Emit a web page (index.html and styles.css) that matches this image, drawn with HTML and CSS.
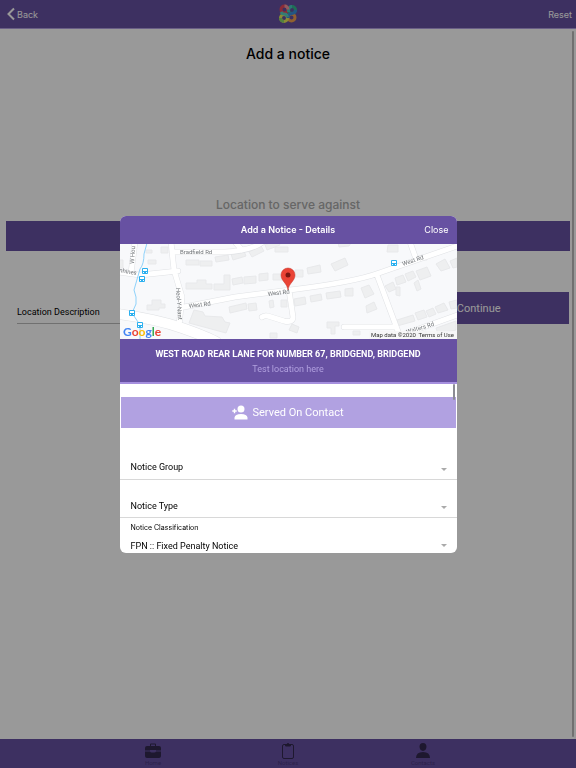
FILE: index.html
```html
<!DOCTYPE html>
<html lang="en">
<head>
<meta charset="utf-8">
<meta name="viewport" content="width=device-width, initial-scale=1">
<title>Add a notice</title>
<link rel="stylesheet" href="styles.css">
</head>
<body>
<div class="app">
  <header class="topbar">
    <a class="topbar-link" href="#back">
      <svg class="chevron" viewBox="0 0 8 14" aria-hidden="true"><path d="M7 1.500L1.500 7L7 12.500"/></svg>Back
    </a>
    <svg class="logo" viewBox="0 0 20 20" role="img" aria-label="Logo">
      <g fill="none" stroke-width="3">
        <circle cx="6.500" cy="5.500" r="3.500" stroke="#e8485c"/>
        <circle cx="14" cy="6" r="3.500" stroke="#35b890"/>
        <circle cx="13.500" cy="13.500" r="3.500" stroke="#f0a050"/>
        <circle cx="6" cy="14" r="3.500" stroke="#e6e65a"/>
        <path d="M2.500 14A3.500 3.500 0 0 0 6 17.500" stroke="#8ad86a"/>
        <path d="M10.500 8V6A3.500 3.500 0 0 1 14 2.500" stroke="#48c8c0"/>
        <path d="M17.500 6A3.500 3.500 0 0 1 14 9.500Q10 9.500 10 14" stroke="#3a90e0"/>
        <path d="M6.500 2A3.500 3.500 0 0 1 10 5.500" stroke="#f59aa0"/>
        <path d="M3 8Q4 10 6 10Q9 10 9.500 13" stroke="#58cfc0"/>
      </g>
    </svg>
    <a class="topbar-link end" href="#reset">Reset</a>
  </header>

  <main class="page">
    <h1>Add a notice</h1>
    <h2>Location to serve against</h2>
    <button class="bar" type="button" aria-label="Choose location"></button>
    <form class="location-row">
      <input class="location-input" type="text" placeholder="Location Description" aria-label="Location Description">
      <button class="continue" type="button">Continue</button>
    </form>
    <span class="page-scroll"></span>
  </main>

  <nav class="tabs">
    <a href="#home">
      <svg viewBox="0 0 16 16" aria-hidden="true"><path fill="currentColor" d="M5 3V1.500Q5 .5 6 .5h4q1 0 1 1V3h3q2 0 2 2v2.500h-5V7H5v.5H0V5q0-2 2-2zM6 3h4V1.500H6zM0 8.500h5q.5 1 1.500 1h3q1 0 1.500-1h5V13q0 2-2 2H2q-2 0-2-2z"/></svg>
      <span>Home</span>
    </a>
    <a href="#notices">
      <svg viewBox="0 0 16 16" aria-hidden="true"><g fill="none" stroke="currentColor"><rect x="2.500" y="1.500" width="11" height="14" rx="1.500"/><path fill="currentColor" d="M5.500 1.500h1.500q0-1 1-1t1 1h1.500v1.500h-5z"/></g></svg>
      <span>Notices</span>
    </a>
    <a href="#contacts">
      <svg viewBox="0 0 16 16" aria-hidden="true"><path fill="currentColor" d="M8 0C10.300 0 11.500 1.600 11.500 3.800S10 8 8 8S4.500 6 4.500 3.800S5.700 0 8 0zM1 15Q1 9 8 9T15 15z"/></svg>
      <span>Contacts</span>
    </a>
  </nav>
</div>

<div class="overlay">
  <section class="modal" role="dialog" aria-labelledby="dialog-title">
    <header class="modal-head">
      <h2 id="dialog-title">Add a Notice - Details</h2>
      <button type="button">Close</button>
    </header>

    <svg class="map" viewBox="0 0 337 95" preserveAspectRatio="xMidYMid slice" role="img" aria-label="Map of West Rd">
      <defs>
        <g id="stop"><rect x="-3" y="-3" width="6" height="6" rx="1" fill="#2bb0ef"/><path d="M-2 -2h4v2h-4zM-2 1h1v1h-1zM1 1h1v1h-1z" fill="#fff"/></g>
        <g id="roads" fill="none" stroke-linecap="round" stroke-linejoin="round">
          <path d="M15 -2L11 29M-2 28L20 31L58 27M51 -2L54 26L62 53L59 82M54 8L105 8Q130 7 143 -2M115 -2L122 6M64 63L115 53L170 46Q235 38 259 29L340 1M290 -2L296 15M257 31L279 90M224 83H276M276 93L340 70M169 46L173 73Q173 79 164 77L148 72Q145 71 142 73"/>
        </g>
      </defs>
      <rect width="337" height="95" fill="#f8f9fb"/>
      <g class="houses">
        <path d="M66 16h13v5H66zM80 17h12v5H80zM95 13l13-2 1 5-13 2zM111 10l13-3 2 5-13 4zM129 8l12-6 3 5-12 6zM145 1l12-5 3 5-13 5zM155 3h13v5h-13z"/>
        <path d="M66 39h11v-3h9v4h6v5H66zM94 40h10V31h6v15H94zM112 35l10-2 1 6-10 2zM124 33l12-1v7l-12 1zM139 30l9-1v7l-9 1zM153 30h10v6h-10zM175 26h8v7h-8zM187 24l13-3 1 7-13 2zM211 20l14-6 3 7-13 6z"/>
        <path d="M27 61h5v-5h9v4h4v4h-6v2H27zM109 63l17-4 1 6-17 4zM128 60l8-1 1 7-8 1zM149 57l4-1 1 7-4 1zM161 56h6v7h-6zM174 55l11-2 1 7-11 2zM190 52l11-2 1 6-11 2zM206 49l14-2 1 6-14 2zM225 45l8-1v8h-8zM241 44l8-3 5 9-9 4zM246 62l8-4 3 7-10 4z"/>
        <path d="M74 66l9 2 2 4 17 1 3 5 5 1-4 10-37-10zM207 78h12v4h-4v8h-4v-6h-4zM172 80l7 3-2 6-8-3zM150 89h7v5h-7zM233 87h7v4h-7z"/>
        <path d="M268 1h10v7h-11zM218 -2l13 1-2 3-10 1zM299 16h8v-5l-9 1zM265 42l8-4 3 7-7 3zM275 34l8-3 3 7-9 3zM285 30l8-3 3 6-8 4zM296 27l11-4 4 9-11 4zM316 20l9-5 5 9-9 3zM330 17l7-3v9l-4 1zM276 43h4v9l-4-1zM294 39l4-3 3 9-4 2z"/>
        <path d="M277 76l16-5 2 6-18 5zM295 69l9-3 3 7-9 3zM306 67l7-3 3 6-7 3zM315 63l9-4 4 7-10 3zM329 58l8-2v8l-6 1zM286 95l20-8 3 8zM316 84l20-7v9l-18 4zM-1 16h4v8H-1zM26 6h6v3h-6zM41 3h7v6h-7zM28 16h8v4h-8z"/>
      </g>
      <use href="#roads" stroke="#e0e2e5" stroke-width="6"/>
      <path d="M-2 70Q36 75 62 84T98 99" fill="none" stroke="#e0e2e5" stroke-width="11"/>
      <use href="#roads" stroke="#fff" stroke-width="5"/>
      <path d="M-2 70Q36 75 62 84T98 99" fill="none" stroke="#fff" stroke-width="10"/>
      <path d="M27 -1L24 10Q24 20 20 25L14 46Q17 53 16 60L12 69L20 81V96" fill="none" stroke="#8fd2fa"/>
      <use href="#stop" x="25" y="27"/><use href="#stop" x="22" y="35"/><use href="#stop" x="12" y="69"/><use href="#stop" x="20" y="81"/><use href="#stop" x="274" y="19"/>
      <g class="road-names">
        <text x="60" y="10">Bradfield Rd</text>
        <text transform="translate(69 64) rotate(-7)">West Rd</text>
        <text transform="translate(148 52) rotate(-7)">West Rd</text>
        <text transform="translate(283 22) rotate(-19)">West Rd</text>
        <text transform="translate(56 44) rotate(86)">Heol-Y-Nant</text>
        <text transform="translate(14 20) rotate(-86)">W Hou</text>
        <text transform="translate(-1 28) rotate(10)">nhines</text>
        <text transform="translate(287 90) rotate(-17)">Walters Rd</text>
      </g>
      <rect x="249" y="87" width="88" height="8" fill="#f6f6f7" fill-opacity=".8"/>
      <g class="credits"><text x="251" y="93">Map data ©2020</text><text x="334" y="93" text-anchor="end">Terms of Use</text></g>
      <text class="google" x="3" y="92"><tspan fill="#4285f4">G</tspan><tspan fill="#ea4335">o</tspan><tspan fill="#fbbc05">o</tspan><tspan fill="#4285f4">g</tspan><tspan fill="#34a853">l</tspan><tspan fill="#ea4335">e</tspan></text>
      <path d="M168 46C167 39 161 37 161 31A7 7 0 0 1 175 31C175 37 169 39 168 46z" fill="#ea4335" stroke="#c5352b" stroke-width=".5"/>
      <circle cx="168" cy="31" r="2.500" fill="#7a1712"/>
    </svg>

    <div class="place">
      <strong>WEST ROAD REAR LANE FOR NUMBER 67, BRIDGEND, BRIDGEND</strong>
      <span>Test location here</span>
    </div>

    <form class="details">
      <button class="served" type="button">
        <svg viewBox="0 0 16 15" aria-hidden="true"><path fill="currentColor" d="M9 .5a3.500 3.500 0 0 1 0 7a3.500 3.500 0 0 1 0-7zM2.500 14.500v-2Q3 9 9 9t6.500 3.500v2zM1.800 3.800h1.400v1.500h1.500v1.400H3.200v1.500H1.800V6.700H.3V5.300h1.500z"/></svg>
        Served On Contact
      </button>
      <div class="field group"><select aria-label="Notice Group"><option>Notice Group</option></select></div>
      <div class="field"><select aria-label="Notice Type"><option>Notice Type</option></select></div>
      <div class="field labelled">
        <label for="classification">Notice Classification</label>
        <select id="classification"><option>FPN :: Fixed Penalty Notice</option></select>
      </div>
      <span class="details-scroll"></span>
    </form>
  </section>
</div>
</body>
</html>
```
FILE: styles.css
```css
* { box-sizing: border-box; }

body {
  margin: 0;
  background: #fff;
  color: #000;
  font-family: Roboto, "Liberation Sans", sans-serif;
  font-size: 9px;
}

h1, h2 { margin: 0; font-family: Inter, "Liberation Sans", sans-serif; font-weight: 500; }
a { color: inherit; text-decoration: none; }
button, input, select { font: inherit; color: inherit; border: 0; border-radius: 0; padding: 0; margin: 0; background: none; }

.app { display: flex; flex-direction: column; min-height: 100vh; }

.topbar {
  display: grid;
  grid-template-columns: 1fr auto 1fr;
  align-items: center;
  height: 29px;
  padding: 0 4px 0 7px;
  background: #6751a2;
  border-bottom: 1px solid #b19fe0;
  color: #fff;
}
.topbar-link { display: flex; align-items: center; gap: 2px; font-family: Inter, sans-serif; }
.topbar-link.end { justify-content: flex-end; }
.chevron { width: 8px; height: 14px; fill: none; stroke: currentColor; stroke-width: 2; }
.logo { width: 20px; height: 20px; margin-right: 4px; }

.page { position: relative; flex: 1; padding: 16px 6px 0; }
.page h1 { font-size: 14px; line-height: 18px; text-align: center; }
.page h2 { margin-top: 134px; font-size: 12px; line-height: 16px; text-align: center; color: #aaa; }
.bar { display: block; width: 100%; height: 30px; margin-top: 8px; background: #6751a2; }
.location-row { display: grid; grid-template-columns: 2fr 1fr; gap: 10px; margin: 41px 1px 0 11px; }
.location-input { width: 100%; height: 32px; padding-top: 9px; border-bottom: 1px solid #bbb; }
.location-input::placeholder { color: #000; opacity: 1; }
.continue { height: 32px; background: #6751a2; color: #fff; font-size: 11px; }
.page-scroll { position: absolute; top: 2px; right: 2px; bottom: 2px; width: 2px; border-radius: 1px; background: #bbb; }

.tabs { display: flex; justify-content: center; height: 29px; background: #6751a2; color: #32284f; }
.tabs a { display: flex; flex-direction: column; align-items: center; width: 135px; padding-top: 4px; font-size: 6px; line-height: 8px; }
.tabs svg { width: 16px; height: 16px; }
.tabs span { color: #49377b; }

.overlay {
  position: fixed;
  inset: 0;
  display: flex;
  align-items: center;
  justify-content: center;
  background: rgba(0, 0, 0, .4);
}
.modal { width: 90%; max-width: 337px; border-radius: 6px; overflow: hidden; background: #fff; }
.modal-head {
  display: grid;
  grid-template-columns: 1fr auto 1fr;
  align-items: center;
  height: 28px;
  padding: 0 8px;
  background: #6751a2;
  color: #fff;
}
.modal-head h2 { grid-column: 2; font-size: 9px; font-weight: 600; }
.modal-head button { justify-self: end; font-family: Inter, sans-serif; }

.map { display: block; width: 100%; height: 95px; }
.houses { fill: #eeeff0; stroke: #e8e9eb; stroke-width: 1px; }
.road-names { font-size: 6px; fill: #6f7377; }
.credits { font-size: 6px; fill: #333; }
.google { font-family: Lato, sans-serif; font-size: 12px; font-weight: 700; }

.place {
  display: flex;
  flex-direction: column;
  align-items: center;
  gap: 3px;
  padding: 9px 4px 7px;
  background: #6751a2;
  border-bottom: 2px solid #a58fde;
  color: #fff;
  line-height: 12px;
}
.place strong { font-weight: 700; }
.place span { color: #b1a0df; }

.details { position: relative; padding-top: 13px; }
.served {
  display: flex;
  align-items: center;
  justify-content: center;
  gap: 4px;
  width: calc(100% - 2px);
  height: 31px;
  margin: 0 1px;
  background: #b1a1e1;
  color: #fff;
  font-size: 11px;
}
.served svg { width: 16px; height: 15px; }
.field { position: relative; height: 38px; padding: 19px 8px 0 11px; border-bottom: 1px solid #d8d8d8; }
.field.group { height: 52px; padding-top: 32px; }
.field.labelled { height: 35px; padding-top: 5px; border: 0; }
.field label { display: block; font-family: Inter, sans-serif; font-size: 7px; line-height: 10px; }
.field select { display: block; width: 100%; height: 15px; appearance: none; }
.field.labelled select { height: 16px; margin-top: 5px; }
.field::after {
  content: "";
  position: absolute;
  right: 10px;
  bottom: 8px;
  border: 3px solid transparent;
  border-top-color: #aaa;
  border-bottom: 0;
}
.field.labelled::after { bottom: 6px; }
.details-scroll { position: absolute; top: 0; right: 2px; width: 2px; height: 16px; border-radius: 1px; background: #8c8c94; }
```
